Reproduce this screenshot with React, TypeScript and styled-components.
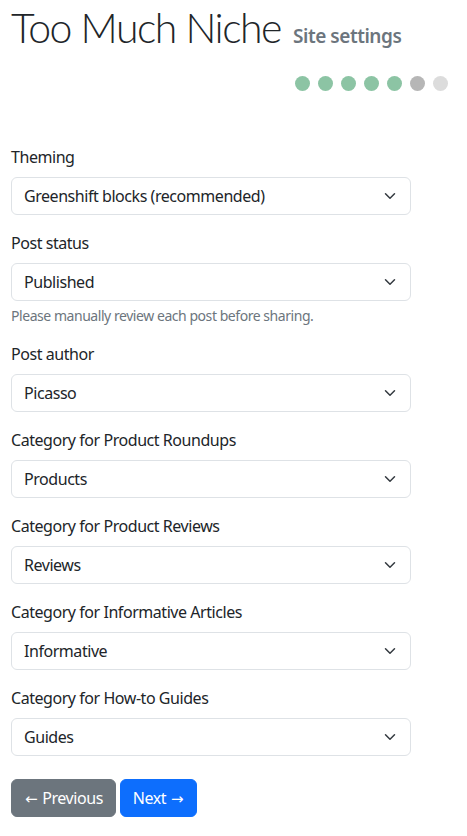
import React from "react";
import styled, { createGlobalStyle } from "styled-components";

const GlobalStyle = createGlobalStyle`
  html, body {
    margin: 0;
    padding: 0;
    background: #ffffff;
    color: #212529;
    font-family: "Noto Sans", "Open Sans", sans-serif;
    font-size: 16px;
    line-height: 1.5;
    letter-spacing: -0.45px;
  }
  * {
    box-sizing: border-box;
  }
`;

const steps = ["done", "done", "done", "done", "done", "current", "todo"];

const fields = [
  { label: "Theming", value: "Greenshift blocks (recommended)" },
  {
    label: "Post status",
    value: "Published",
    help: "Please manually review each post before sharing.",
  },
  { label: "Post author", value: "Picasso" },
  { label: "Category for Product Roundups", value: "Products" },
  { label: "Category for Product Reviews", value: "Reviews" },
  { label: "Category for Informative Articles", value: "Informative" },
  { label: "Category for How-to Guides", value: "Guides" },
];

const App = () => {
  return (
    <>
      <GlobalStyle />
      <Page>
        <Header>
          <Title>Too Much Niche</Title>
          <Subtitle>Site settings</Subtitle>
        </Header>
        <Progress>
          {steps.map((s, i) => (
            <Dot key={i} state={s} />
          ))}
        </Progress>
        <Form>
          {fields.map((f) => (
            <Group key={f.label}>
              <Label>{f.label}</Label>
              <SelectBox>
                <span>{f.value}</span>
                <svg width="16" height="12" viewBox="0 0 16 16">
                  <path
                    d="m2 5 6 6 6-6"
                    fill="none"
                    stroke="#343a40"
                    strokeWidth="2"
                    strokeLinecap="round"
                    strokeLinejoin="round"
                  />
                </svg>
              </SelectBox>
              {f.help && <Help>{f.help}</Help>}
            </Group>
          ))}
          <Actions>
            <Button variant="secondary">
              <Arrow>←</Arrow> Previous
            </Button>
            <Button variant="primary">
              Next <Arrow>→</Arrow>
            </Button>
          </Actions>
        </Form>
      </Page>
    </>
  );
};

export default App;

const Page = styled.div`
  padding: 0 19px 0 11px;
`;

const Header = styled.div`
  display: flex;
  align-items: baseline;
  gap: 12px;
  padding-top: 3px;
`;

const Title = styled.h1`
  margin: 0;
  font-family: "Lato", sans-serif;
  font-weight: 300;
  font-size: 41px;
  letter-spacing: -1.5px;
  line-height: 1.2;
  color: #212529;
`;

const Subtitle = styled.small`
  font-size: 19px;
  font-weight: 600;
  color: #6c757d;
`;

const Progress = styled.div`
  display: flex;
  justify-content: flex-end;
  gap: 8px;
  margin-top: 24px;
`;

const Dot = styled.span<{ state: string }>`
  width: 15px;
  height: 15px;
  border-radius: 50%;
  background: ${({ state }) =>
    state === "done" ? "#8cc4a4" : state === "current" ? "#b6b6b6" : "#dcdcdc"};
`;

const Form = styled.div`
  margin-top: 54px;
  width: 400px;
`;

const Group = styled.div`
  margin-bottom: 16px;
`;

const Label = styled.div`
  margin-bottom: 8px;
`;

const SelectBox = styled.div`
  display: flex;
  align-items: center;
  justify-content: space-between;
  height: 38px;
  padding: 0 12px;
  border: 1px solid #dee2e6;
  border-radius: 6px;
  background: #fff;

  svg {
    flex-shrink: 0;
  }
`;

const Help = styled.div`
  margin-top: 4px;
  font-size: 14px;
  color: #6c757d;
`;

const Actions = styled.div`
  display: flex;
  gap: 4px;
  margin-top: 23px;
`;

const Arrow = styled.span`
  font-family: "DejaVu Sans", sans-serif;
  font-size: 15px;
  letter-spacing: 0;
  margin: 0 1px;
`;

const Button = styled.button<{ variant: "primary" | "secondary" }>`
  font-family: inherit;
  font-size: 16px;
  letter-spacing: inherit;
  line-height: 1.5;
  height: 38px;
  padding: 0 12px;
  border-radius: 6px;
  border: 1px solid
    ${({ variant }) => (variant === "primary" ? "#0d6efd" : "#6c757d")};
  background: ${({ variant }) =>
    variant === "primary" ? "#0d6efd" : "#6c757d"};
  color: #fff;
`;
